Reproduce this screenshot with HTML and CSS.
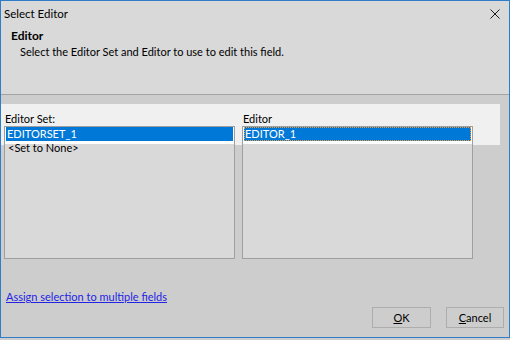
FILE: index.html
```html
<!DOCTYPE html>
<html lang="en">
<head>
    <meta charset="UTF-8">
    <meta name="viewport" content="width=device-width, initial-scale=1.0">
    <title>Select Editor</title>
    <link rel="stylesheet" href="styles.css">
</head>
<body>
    <div class="window">
        <div class="header">
            <div class="titlebar">
                <span class="title">Select Editor</span>
                <svg class="close" width="10" height="10" viewBox="0 0 10 10">
                    <path d="M0.5 0.5 L9.5 9.5 M9.5 0.5 L0.5 9.5" stroke="#1a1a1a" stroke-width="1" fill="none"/>
                </svg>
            </div>
            <div class="intro">
                <div class="intro-title">Editor</div>
                <div class="intro-text">Select the Editor Set and Editor to use to edit this field.</div>
            </div>
        </div>

        <div class="content">
            <div class="pickers">
                <div class="picker">
                    <div class="picker-label">Editor Set:</div>
                    <div class="listbox">
                        <div class="item selected">EDITORSET_1</div>
                        <div class="item">&lt;Set to None&gt;</div>
                    </div>
                </div>
                <div class="picker">
                    <div class="picker-label">Editor</div>
                    <div class="listbox">
                        <div class="item selected focused">EDITOR_1</div>
                    </div>
                </div>
            </div>

            <div class="footer">
                <a class="link" href="#">Assign selection to multiple fields</a>
                <div class="actions">
                    <button class="btn"><u>O</u>K</button>
                    <button class="btn"><u>C</u>ancel</button>
                </div>
            </div>
        </div>
    </div>
</body>
</html>
```

FILE: styles.css
```css
:root {
    --accent: #2f7cc8;
    --header-bg: #d9d9d9;
    --body-bg: #cdcdcd;
    --band: #f0f0f0;
    --list-border: #9f9f9f;
    --select: #0078d7;
}

* {
    margin: 0;
    padding: 0;
    box-sizing: border-box;
}

body {
    font-family: Lato, "Liberation Sans", sans-serif;
    font-size: 11px;
    color: #000;
    background: var(--body-bg);
    width: 510px;
    height: 340px;
    overflow: hidden;
}

.window {
    width: 510px;
    height: 338px;
    border: 1px solid var(--accent);
    display: flex;
    flex-direction: column;
    background: var(--body-bg);
}

.header {
    background: var(--header-bg);
    height: 94px;
    border-bottom: 1px solid #a3a3a3;
}

.titlebar {
    height: 26px;
    display: flex;
    align-items: center;
    justify-content: space-between;
    padding: 0 9px 1px 3px;
}

.title {
    font-size: 11.5px;
    line-height: 16px;
}

.close {
    display: block;
}

.intro {
    padding: 1px 0 0 10px;
}

.intro-title {
    font-size: 12px;
    font-weight: 700;
    line-height: 16px;
}

.intro-text {
    padding-left: 9px;
    line-height: 16px;
}

.content {
    flex: 1;
    display: flex;
    flex-direction: column;
    padding: 17px 5px 9px 3px;
    background: linear-gradient(var(--band), var(--band)) no-repeat 0 9px / 499px 41px, var(--body-bg);
}

.pickers {
    display: flex;
    gap: 7px;
}

.picker {
    width: 231px;
}

.picker-label {
    line-height: 14px;
    padding-left: 1px;
}

.listbox {
    height: 133px;
    border: 1px solid var(--list-border);
    background: linear-gradient(#ffffff 0 17px, #d9d9d9 17px);
    padding: 0 1px;
}

.item {
    height: 14px;
    line-height: 14px;
    padding-left: 1px;
    white-space: nowrap;
}

.item.selected {
    background: var(--select);
    color: #fff;
}

.item.focused {
    border: 1px dotted #f29a2e;
    line-height: 12px;
    padding-left: 0;
}

.item + .item {
    padding-left: 2px;
}

.footer {
    margin-top: auto;
    display: flex;
    flex-direction: column;
}

.link {
    color: #2323e6;
    line-height: 15px;
    padding-left: 2px;
    align-self: flex-start;
}

.actions {
    display: flex;
    justify-content: flex-end;
    gap: 15px;
    margin-top: 3px;
}

.btn {
    width: 58px;
    height: 21px;
    border: 1px solid #adadad;
    background: var(--body-bg);
    font-family: inherit;
    font-size: 11px;
    color: #000;
    line-height: 17px;
}

.btn:first-child {
    width: 59px;
}

.btn u {
    text-decoration-thickness: 1px;
}
```
